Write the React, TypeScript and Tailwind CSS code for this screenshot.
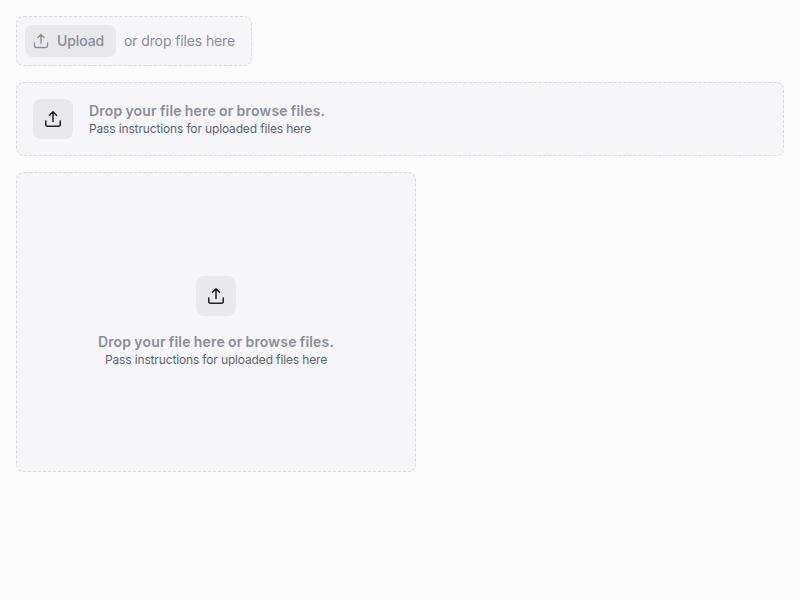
import React from "react";

function UploadIcon({ size }: { size: number }) {
  return (
    <svg className="shrink-0" width={size} height={size} viewBox="0 0 20 20" fill="none" stroke="currentColor" strokeWidth="1.5" strokeLinecap="round" strokeLinejoin="round">
      <path d="M6.5 6.25L10 2.75L13.5 6.25M10 3V12.5M2.75 12V15.25A2 2 0 0 0 4.75 17.25H15.25A2 2 0 0 0 17.25 15.25V12" />
    </svg>
  );
}

function IconTile() {
  return (
    <div className="flex size-10 shrink-0 items-center justify-center rounded-lg bg-[#e8e8ec] text-[#1c2024]">
      <UploadIcon size={20} />
    </div>
  );
}

function Copy() {
  return (
    <div>
      <div className="text-sm leading-5 font-semibold tracking-[0.18px] [word-spacing:-0.6px] text-[#8b8d98]">Drop your file here or browse files.</div>
      <div className="text-xs leading-4 tracking-[-0.145px] text-[#60646c]">Pass instructions for uploaded files here</div>
    </div>
  );
}

const zone = "rounded-lg border border-dashed border-[#d8d8df] bg-[#f6f6f8]";

export default function App() {
  return (
    <main className="flex h-screen flex-col items-start gap-4 bg-[#fcfcfd] p-4 font-['Inter',sans-serif]">
      <div className={`${zone} flex h-[50px] w-[236px] items-center gap-2 p-2`}>
        <button className="flex h-8 w-[91px] items-center gap-[7px] rounded-lg bg-[#e8e8ec] pl-[7px] text-sm font-medium tracking-[-0.1px] text-[#8b8d98]">
          <UploadIcon size={18} />
          Upload
        </button>
        <span className="text-sm tracking-[-0.12px] whitespace-nowrap text-[#8b8d98]">or drop files here</span>
      </div>
      <div className={`${zone} flex h-[74px] w-full items-center gap-4 p-4`}>
        <IconTile />
        <Copy />
      </div>
      <div className={`${zone} flex h-[300px] w-[400px] flex-col items-center justify-center gap-4 text-center`}>
        <IconTile />
        <Copy />
      </div>
    </main>
  );
}
